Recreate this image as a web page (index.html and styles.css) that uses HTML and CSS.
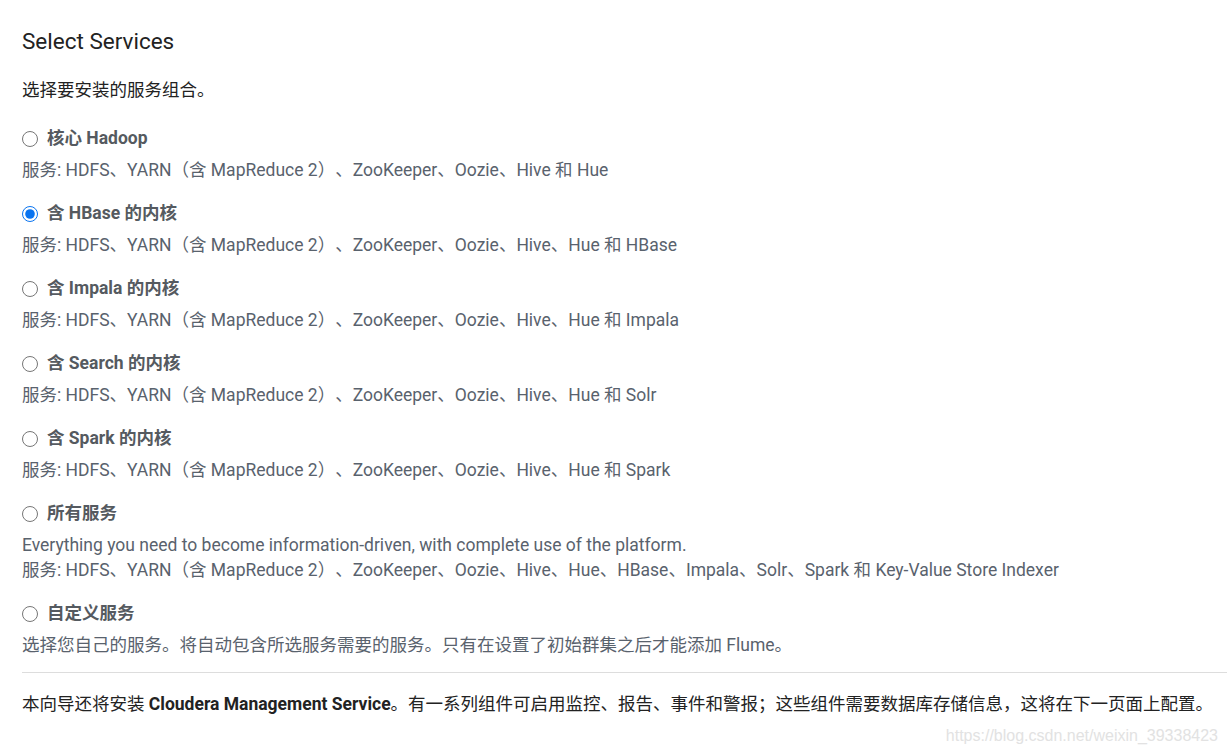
FILE: index.html
```html
<!DOCTYPE html>
<html lang="zh-CN">
<head>
  <meta charset="UTF-8">
  <title>Select Services</title>
  <link rel="stylesheet" href="styles.css">
</head>
<body>

<div class="wizard">
  <h2 class="title">Select Services</h2>
  <p class="intro">选择要安装的服务组合。</p>

  <div class="options">
    <div class="option">
      <label class="option-label"><input type="radio" name="bundle"> 核心 Hadoop</label>
      <p class="desc">服务: HDFS、YARN（含 MapReduce 2）、ZooKeeper、Oozie、Hive 和 Hue</p>
    </div>
    <div class="option">
      <label class="option-label"><input type="radio" name="bundle" checked> 含 HBase 的内核</label>
      <p class="desc">服务: HDFS、YARN（含 MapReduce 2）、ZooKeeper、Oozie、Hive、Hue 和 HBase</p>
    </div>
    <div class="option">
      <label class="option-label"><input type="radio" name="bundle"> 含 Impala 的内核</label>
      <p class="desc">服务: HDFS、YARN（含 MapReduce 2）、ZooKeeper、Oozie、Hive、Hue 和 Impala</p>
    </div>
    <div class="option">
      <label class="option-label"><input type="radio" name="bundle"> 含 Search 的内核</label>
      <p class="desc">服务: HDFS、YARN（含 MapReduce 2）、ZooKeeper、Oozie、Hive、Hue 和 Solr</p>
    </div>
    <div class="option">
      <label class="option-label"><input type="radio" name="bundle"> 含 Spark 的内核</label>
      <p class="desc">服务: HDFS、YARN（含 MapReduce 2）、ZooKeeper、Oozie、Hive、Hue 和 Spark</p>
    </div>
    <div class="option">
      <label class="option-label"><input type="radio" name="bundle"> 所有服务</label>
      <p class="desc">Everything you need to become information-driven, with complete use of the platform.<br>服务: HDFS、YARN（含 MapReduce 2）、ZooKeeper、Oozie、Hive、Hue、HBase、Impala、Solr、Spark 和 Key-Value Store Indexer</p>
    </div>
    <div class="option">
      <label class="option-label"><input type="radio" name="bundle"> 自定义服务</label>
      <p class="desc">选择您自己的服务。将自动包含所选服务需要的服务。只有在设置了初始群集之后才能添加 Flume。</p>
    </div>
  </div>

  <hr class="divider">
  <p class="note">本向导还将安装 <strong>Cloudera Management Service</strong>。有一系列组件可启用监控、报告、事件和警报；这些组件需要数据库存储信息，这将在下一页面上配置。</p>
</div>

<div class="watermark">https://blog.csdn.net/weixin_39338423</div>

</body>
</html>
```

FILE: styles.css
```css
body {
  margin: 0;
  font-family: Roboto, "Noto Sans CJK SC", sans-serif;
  font-size: 17.5px;
  line-height: 25px;
  color: #222;
  background-color: white;
  text-spacing-trim: space-all;
}

.wizard {
  padding: 27px 0 0 22px;
}

.title {
  margin: 0;
  font-size: 22.5px;
  font-weight: normal;
  line-height: 28px;
}

.intro {
  margin: 23px 0 0;
}

.options {
  margin-top: 23px;
}

.option {
  margin-bottom: 18px;
}

.option:last-child {
  margin-bottom: 14px;
}

.option-label {
  display: flex;
  align-items: center;
  gap: 9px;
  font-weight: bold;
  color: #555a60;
}

.option-label input {
  width: 16px;
  height: 16px;
  margin: 0;
  accent-color: #0a74f0;
}

.desc {
  margin: 7px 0 0;
  color: #59626d;
}

.divider {
  border: none;
  border-top: 1px solid #ddd;
  margin: 0;
}

.note {
  margin: 19px 0 0;
}

.note strong {
  color: #222;
}

.watermark {
  position: absolute;
  right: 9px;
  bottom: 8px;
  font-family: "Liberation Sans", sans-serif;
  font-size: 16px;
  color: #e2e2e2;
}
```
